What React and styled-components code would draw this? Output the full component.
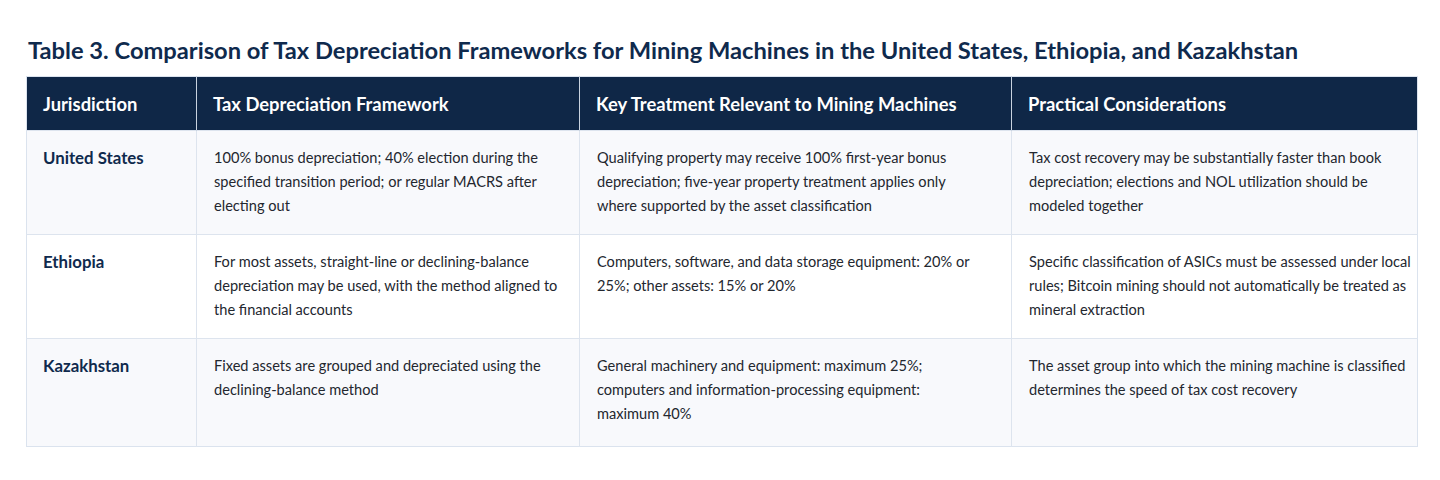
import styled, { createGlobalStyle } from "styled-components";

const rows = [
  {
    jurisdiction: "United States",
    framework:
      "100% bonus depreciation; 40% election during the specified transition period; or regular MACRS after electing out",
    treatment:
      "Qualifying property may receive 100% first-year bonus depreciation; five-year property treatment applies only where supported by the asset classification",
    practical:
      "Tax cost recovery may be substantially faster than book depreciation; elections and NOL utilization should be modeled together",
  },
  {
    jurisdiction: "Ethiopia",
    framework:
      "For most assets, straight-line or declining-balance depreciation may be used, with the method aligned to the financial accounts",
    treatment:
      "Computers, software, and data storage equipment: 20% or 25%; other assets: 15% or 20%",
    practical:
      "Specific classification of ASICs must be assessed under local rules; Bitcoin mining should not automatically be treated as mineral extraction",
  },
  {
    jurisdiction: "Kazakhstan",
    framework:
      "Fixed assets are grouped and depreciated using the declining-balance method",
    treatment:
      "General machinery and equipment: maximum 25%; computers and information-processing equipment: maximum 40%",
    practical:
      "The asset group into which the mining machine is classified determines the speed of tax cost recovery",
  },
];

const columns = [
  { label: "Jurisdiction", width: 170 },
  { label: "Tax Depreciation Framework", width: 383 },
  { label: "Key Treatment Relevant to Mining Machines", width: 432 },
  { label: "Practical Considerations", width: 406 },
];

export default function App() {
  return (
    <>
      <GlobalStyle />
      <Page>
        <Title>
          Table 3. Comparison of Tax Depreciation Frameworks for Mining Machines in
          the United States, Ethiopia, and Kazakhstan
        </Title>
        <Table>
          <colgroup>
            {columns.map((c) => (
              <col key={c.label} style={{ width: c.width }} />
            ))}
          </colgroup>
          <thead>
            <tr>
              {columns.map((c) => (
                <HeadCell key={c.label}>{c.label}</HeadCell>
              ))}
            </tr>
          </thead>
          <tbody>
            {rows.map((r, i) => (
              <Row key={r.jurisdiction} $shaded={i % 2 === 0}>
                <NameCell>{r.jurisdiction}</NameCell>
                <Cell>{r.framework}</Cell>
                <Cell $padRight={26}>{r.treatment}</Cell>
                <Cell $padRight={4}>{r.practical}</Cell>
              </Row>
            ))}
          </tbody>
        </Table>
      </Page>
    </>
  );
}

const GlobalStyle = createGlobalStyle`
  html, body {
    margin: 0;
    background: #ffffff;
  }
  body {
    font-family: Lato, "Open Sans", "Liberation Sans", sans-serif;
    -webkit-font-smoothing: antialiased;
  }
`;

const Page = styled.main`
  width: 1440px;
  height: 480px;
  box-sizing: border-box;
  padding: 36px 0 0 26px;
  background: #ffffff;
`;

const Title = styled.h1`
  margin: 0 0 12px 2px;
  font-size: 23.7px;
  line-height: 28px;
  font-weight: 700;
  color: #0f2a4d;
  letter-spacing: 0;
`;

const Table = styled.table`
  width: 1391px;
  table-layout: fixed;
  border-collapse: collapse;
  border: 1px solid #dbe3ee;
`;

const HeadCell = styled.th`
  height: 54px;
  box-sizing: border-box;
  padding: 0 16px;
  background: #0f2747;
  color: #ffffff;
  font-size: 18.4px;
  font-weight: 700;
  text-align: left;
  vertical-align: middle;
  border-left: 1px solid #c9d3e0;

  &:first-child {
    border-left: none;
  }
`;

const Row = styled.tr`
  background: ${(p) => (p.$shaded ? "#f8f9fc" : "#ffffff")};
  border-top: 1px solid #dde4ee;

  &:last-child td {
    padding-bottom: 20px;
  }
`;

const Cell = styled.td`
  padding: 15px ${(p) => p.$padRight ?? 16}px 16px 17px;
  vertical-align: top;
  font-size: 14.6px;
  line-height: 24px;
  color: #23272f;
  border-left: 1px solid #dde4ee;
`;

const NameCell = styled(Cell)`
  padding-left: 16px;
  font-size: 16.8px;
  font-weight: 700;
  color: #0f2a4d;
  border-left: none;
`;
